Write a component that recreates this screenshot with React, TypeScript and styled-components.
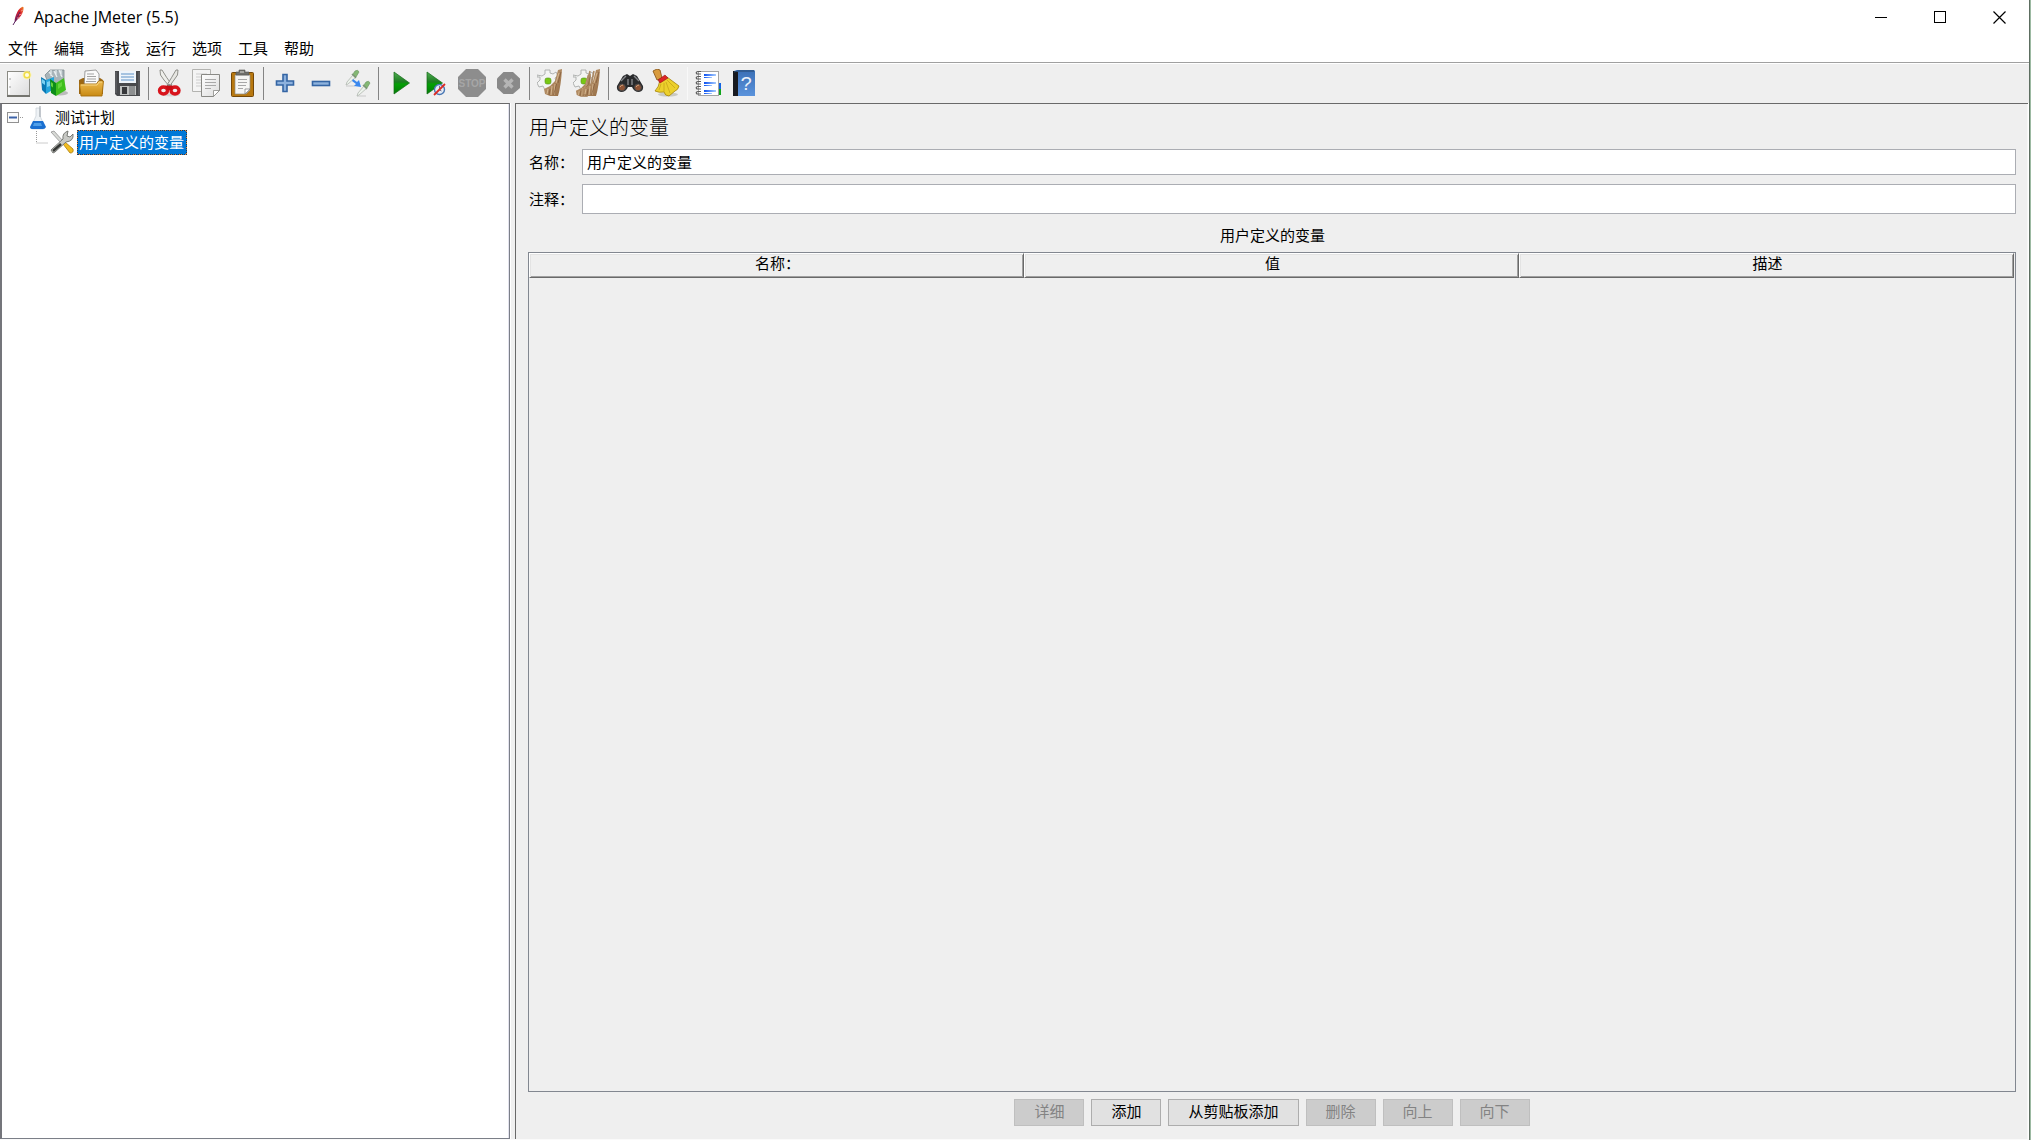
import React, { useState } from 'react';
import styled, { createGlobalStyle, css } from 'styled-components';

const cjk = '"Noto Sans CJK SC", sans-serif';

const GlobalStyle = createGlobalStyle`
  * { box-sizing: border-box; }
  body { margin: 0; background: #ffffff; }
  button, input { font-family: inherit; font-size: inherit; color: inherit; }
`;

const Desktop = styled.div`
  min-height: 100vh;
  display: flex;
  background: #9cbaa2;
  padding-right: 1px;
  font-family: ${cjk};
  font-size: 15px;
  color: #000000;
`;

const Window = styled.div`
  flex: 1;
  min-width: 0;
  display: flex;
  flex-direction: column;
  background: #ffffff;
  border-right: 1px solid #5d6e61;
`;

const TitleBar = styled.header`
  height: 35px;
  display: flex;
  align-items: center;
  padding: 0 0 1px 9px;
`;

const AppName = styled.h1`
  flex: 1;
  margin: 0 0 0 7px;
  font-family: "Open Sans", "Noto Sans", sans-serif;
  font-size: 16px;
  font-weight: 400;
  line-height: 24px;
`;

const CaptionButton = styled.button`
  width: 59px;
  height: 34px;
  padding: 0;
  border: 0;
  background: transparent;
  display: flex;
  align-items: center;
  justify-content: center;
`;

const MenuBar = styled.nav`
  height: 27px;
  display: flex;
  align-items: center;
  gap: 16px;
  padding: 0 0 2px 8px;
`;

const MenuButton = styled.button`
  padding: 0;
  border: 0;
  background: transparent;
  line-height: 22px;
`;

const Toolbar = styled.div`
  height: 41px;
  display: flex;
  align-items: center;
  padding-left: 1px;
  background: #efefef;
  border-top: 1px solid #a0a0a0;
  box-shadow: inset 0 1px 0 #ffffff;
`;

const ToolButton = styled.button`
  width: 36px;
  height: 36px;
  padding: 0;
  border: 0;
  background: transparent;
  display: flex;
  align-items: center;
  justify-content: center;
`;

const Separator = styled.span<{ $faint?: boolean }>`
  width: 1px;
  height: 33px;
  margin: 0 3px;
  background: ${p => (p.$faint ? '#f8f8f8' : '#848484')};
`;

const Workspace = styled.div`
  flex: 1;
  display: flex;
  border-bottom: 1px solid #fafafa;
`;

const TreePane = styled.aside`
  width: 510px;
  flex: none;
  padding: 2px 0 0 5px;
  background: #ffffff;
  border: 1px solid #7b7f88;
  border-left: 2px solid #74757b;
  border-top-color: #696969;
  box-shadow: inset -1px 0 0 #e3e3ee;
`;

const Divider = styled.div`
  width: 5px;
  background: #f0f0f0;
  border-left: 1px solid #ffffff;
`;

const TreeList = styled.ul`
  margin: 0;
  padding: 0;
  list-style: none;
`;

const TreeRow = styled.div<{ $indent?: number }>`
  height: 24px;
  display: flex;
  align-items: center;
  padding-left: ${p => p.$indent ?? 0}px;
`;

const Expander = styled.button`
  width: 21px;
  height: 12px;
  padding: 0;
  border: 0;
  background: transparent;
  display: flex;
`;

const NodeLabel = styled.button<{ $selected?: boolean }>`
  height: 24px;
  padding: 0 2px 2px 0;
  border: 1px solid transparent;
  background: transparent;
  line-height: 20px;
  white-space: nowrap;
  ${p =>
    p.$selected &&
    css`
      height: 25px;
      margin-left: 3px;
      padding: 0 2px 1px 1px;
      background: #0078d7;
      border: 1px dashed #e08a3c;
      outline: 1px dotted #1c3a5c;
      outline-offset: -1px;
      color: #ffffff;
    `}
`;

const Editor = styled.main`
  flex: 1;
  min-width: 0;
  display: flex;
  flex-direction: column;
  padding: 8px 12px 13px;
  background: #efefef;
  border: solid #696969;
  border-width: 1px 0 0 1px;
  box-shadow: inset -1px 0 0 #f7f7f7;
  margin-right: 1px;
`;

const EditorTitle = styled.h2`
  margin: 0 0 7px;
  padding-left: 1px;
  font-size: 20px;
  font-weight: 300;
  line-height: 30px;
`;

const Field = styled.div<{ $height: number }>`
  height: ${p => p.$height}px;
  margin-bottom: 9px;
  display: flex;
  align-items: center;
  padding-left: 1px;
`;

const FieldLabel = styled.label`
  width: 53px;
  line-height: 22px;
`;

const TextBox = styled.input`
  flex: 1;
  min-width: 0;
  height: 100%;
  padding: 0 4px 2px;
  border: 1px solid #abadb3;
  border-radius: 0;
  background: #ffffff;
  outline: none;
`;

const VariablesSection = styled.section`
  flex: 1;
  display: flex;
  flex-direction: column;
`;

const SectionTitle = styled.h3`
  margin: 0;
  padding: 1px 0 6px 1px;
  font-size: 15px;
  font-weight: 400;
  line-height: 22px;
  text-align: center;
`;

const TableFrame = styled.div`
  flex: 1;
  border: 1px solid #828790;
  padding-right: 1px;
`;

const VariablesTable = styled.table`
  width: 100%;
  table-layout: fixed;
  border-collapse: separate;
  border-spacing: 0;
`;

const ColumnHead = styled.th`
  height: 25px;
  padding: 0 0 5px 2px;
  font-weight: 400;
  line-height: 18px;
  border: 1px solid;
  border-color: #ffffff #696969 #696969 #ffffff;
  box-shadow: inset 1px 1px 0 #e3e3e3, inset -1px -1px 0 #a0a0a0;
`;

const Actions = styled.div`
  display: flex;
  justify-content: center;
  gap: 7px;
  padding-top: 7px;
`;

const ActionButton = styled.button`
  height: 27px;
  padding: 0 19px 3px;
  border: 1px solid #adadad;
  background: #e1e1e1;
  line-height: 20px;
  &:disabled {
    border-color: #bfbfbf;
    background: #cccccc;
    color: #838383;
  }
`;

type ArtProps = { children: React.ReactNode };
const Art = ({ children }: ArtProps) => (
  <svg width="28" height="28" viewBox="0 0 28 28" aria-hidden="true">{children}</svg>
);

const Gradients = () => (
  <svg width="0" height="0" style={{ position: 'absolute' }} aria-hidden="true">
    <defs>
      <linearGradient id="paper" x1="0" y1="0" x2="1" y2="1"><stop offset="0" stopColor="#fff" /><stop offset="1" stopColor="#dcdcdc" /></linearGradient>
      <linearGradient id="gold" x1="0" y1="0" x2="0" y2="1"><stop offset="0" stopColor="#eebb50" /><stop offset="1" stopColor="#c88a14" /></linearGradient>
      <linearGradient id="green" x1="0" y1="0" x2="0" y2="1"><stop offset="0" stopColor="#4fae50" /><stop offset=".45" stopColor="#1d7d22" /><stop offset=".55" stopColor="#04a004" /><stop offset="1" stopColor="#047a08" /></linearGradient>
      <linearGradient id="book" x1="0" y1="0" x2="0" y2="1"><stop offset="0" stopColor="#3a6fb6" /><stop offset="1" stopColor="#5b93dc" /></linearGradient>
      <linearGradient id="feather" x1="1" y1="0" x2="0" y2="1"><stop offset="0" stopColor="#f08a24" /><stop offset=".4" stopColor="#d8202c" /><stop offset="1" stopColor="#7a1e62" /></linearGradient>
      <linearGradient id="rule" x1="0" y1="0" x2="1" y2="0"><stop offset="0" stopColor="#0a50f0" /><stop offset="1" stopColor="#a8ccff" /></linearGradient>
      <linearGradient id="straw" x1="0" y1="0" x2="1" y2="1"><stop offset="0" stopColor="#c8a47c" /><stop offset="1" stopColor="#946c44" /></linearGradient>
    </defs>
  </svg>
);

const FeatherIcon = () => (
  <svg width="18" height="22" viewBox="0 0 18 22" aria-hidden="true">
    <path d="M13 1Q15 0 14.500 3Q14 8 10 12L6 16Q5 14 7 9Q9 3 13 1Z" fill="url(#feather)" />
    <path d="M11 6L7 14L4 19" stroke="#5c2460" strokeWidth="1" fill="none" />
    <path d="M12 5l2-1M10 9l3-1M8 12l3 0" stroke="#f6a0a0" strokeWidth=".8" />
  </svg>
);

const NewIcon = () => (
  <Art>
    <rect x="2.500" y="2.500" width="22" height="24" fill="url(#paper)" stroke="#8b8b84" />
    <path d="M2 27h23" stroke="#74746e" strokeWidth="2" />
    <path d="M4 4v21" stroke="#fff" strokeWidth="1.500" />
    <path d="M5 9v2M5 17v2" stroke="#a0a0a0" />
    <circle cx="22" cy="6" r="4.500" fill="#fff6a8" opacity=".7" />
    <circle cx="22" cy="6" r="2.800" fill="#fffde0" stroke="#f0dc48" strokeWidth="1.500" />
  </Art>
);

const TemplatesIcon = () => (
  <Art>
    <ellipse cx="19" cy="24" rx="8" ry="2.500" fill="#bbb" />
    <path d="M4 6L9 1h14v15H8z" fill="#a9b4b9" stroke="#7e8b91" strokeWidth=".8" />
    <path d="M8 3l4 5M13 2l3 6M18 1l3 7M10 1v6M15 1v6M20 1v6" stroke="#e8eef0" strokeWidth="1.200" />
    <path d="M0 8l5 3v14l-4-4z" fill="#0878b4" />
    <path d="M5 11l8-3v12l-8 5z" fill="#24a4dc" /><path d="M1 10l3 2v4l-3-2zM6 13l3-1v5l-3 1z" fill="#78d0f2" />
    <path d="M9 10l6 4v13l-5-3z" fill="#0c8c18" />
    <path d="M15 14l8-5 2 12-10 6z" fill="#3ebf1c" />
    <path d="M10 13l2 1.500v4l-2-1.500zM17 15l4-2v4l-4 3z" fill="#63d43c" />
  </Art>
);

const OpenIcon = () => (
  <Art>
    <path d="M2 11l4-2h17l3 2v14H2z" fill="#9c6714" />
    <path d="M8 2l11-1 3 4v13H7z" fill="#fafafa" stroke="#888" strokeWidth=".8" />
    <path d="M10 5h7M10 7.500h9M10 10h9M9 12.500h10" stroke="#a3a3a3" strokeWidth="1" />
    <path d="M2.500 15h17l2-3h5l-1.500 15H4z" fill="url(#gold)" stroke="#a66d0c" strokeWidth=".9" />
    <path d="M4 16h16l2-3h3" fill="none" stroke="#f7d888" strokeWidth="1" />
  </Art>
);

const SaveIcon = () => (
  <Art>
    <path d="M2 2h25v25H4l-2-2z" fill="#48494c" />
    <path d="M3 3v21M26 3v23" stroke="#696a6e" />
    <rect x="6" y="2" width="17" height="12" fill="#eef4fa" />
    <path d="M8 5h13M8 8h13M8 11h13" stroke="#8fb3d8" strokeWidth="1.500" />
    <rect x="7" y="17" width="16" height="9" fill="#bfc1c0" />
    <rect x="9" y="18" width="5" height="7" fill="#36373a" /><rect x="16" y="17" width="6" height="9" fill="#8d8f90" />
  </Art>
);

const CutIcon = () => (
  <Art>
    <ellipse cx="15" cy="26" rx="9" ry="1.500" fill="#d6d6d6" />
    <path d="M4 1q-1 5 4 10l6 7 2-2Q10 8 6 1z" fill="#efefeb" stroke="#85857f" strokeWidth=".9" />
    <path d="M22 1q1 5-4 10l-5 7-2-2Q16 8 20 1z" fill="#e6e6e2" stroke="#85857f" strokeWidth=".9" />
    <ellipse cx="7.500" cy="21.500" rx="4" ry="3.500" fill="#efefef" stroke="#d8141c" strokeWidth="3.400" />
    <ellipse cx="19" cy="21.500" rx="4" ry="3.500" fill="#efefef" stroke="#d8141c" strokeWidth="3.400" />
    <path d="M9 17l4-1 4 1-1 4h-5z" fill="#c80c14" /><circle cx="13" cy="16" r="1" fill="#777" />
  </Art>
);

const CopyIcon = () => (
  <Art>
    <path d="M.5.500h18v22H.500z" fill="#f4f4f4" stroke="#b3b3b0" />
    <path d="M4 5h11M4 8h5M4 11h5M4 14h5M4 17h5" stroke="#cdcdcd" />
    <path d="M9.500 5.500h18v16l-6 6h-12z" fill="url(#paper)" stroke="#898985" />
    <path d="M13 10.500h11M13 13.500h11M13 16.500h11M13 19.500h6" stroke="#a8a8a8" />
    <path d="M21.500 27.500v-6h6z" fill="#fff" stroke="#898985" strokeWidth=".8" />
  </Art>
);

const PasteIcon = () => (
  <Art>
    <rect x="3.500" y="3.500" width="22" height="24" rx="1" fill="#b8780f" stroke="#744808" />
    <path d="M7 6h15v15l-4 4H7z" fill="#f6f6f4" stroke="#8c8c86" strokeWidth=".7" />
    <path d="M10 10.500h9M10 13.500h9M10 16.500h8M10 19.500h5" stroke="#a7a7a7" />
    <path d="M22 20l-5 5v-5z" fill="#fff" stroke="#777" strokeWidth=".7" />
    <path d="M8 6V3h3V1h6v2h4v3z" fill="#70706c" stroke="#555550" strokeWidth=".6" />
    <path d="M12 3h4" stroke="#deded8" />
  </Art>
);

const AddIcon = () => (
  <Art><path d="M12 5.500h4v6.500h6.500v4H16v6.500h-4V16H5.500v-4H12z" fill="#8db1dd" stroke="#3465a4" strokeWidth="1.600" /></Art>
);

const RemoveIcon = () => (
  <Art><rect x="5.500" y="12.500" width="17" height="4" fill="#8eb2dd" stroke="#3465a4" strokeWidth="1.600" /></Art>
);

const Pipette = () => (
  <g>
    <path d="M3 16l1-3 6-7 3 2-8 7z" fill="#edf3ec" stroke="#b1b7b0" strokeWidth=".8" />
    <path d="M9 5l4 4" stroke="#81957c" strokeWidth="1.500" />
    <path d="M10 5l2-3q3-2 4 1l-3 5z" fill="#84b874" stroke="#6a945f" strokeWidth=".6" />
  </g>
);

const ToggleIcon = () => (
  <Art>
    <path d="M3 17h9M14 27h9" stroke="#d6d6d6" strokeWidth="1.600" />
    <Pipette /><g transform="translate(11 11)"><Pipette /></g>
    <path d="M10 10l4 3 2-2 2 7-7-1 2-2-4-3z" fill="#3b88ee" />
  </Art>
);

const StartIcon = () => (
  <Art><path d="M8 3l15.500 11L8 25z" fill="url(#green)" stroke="#146c18" strokeWidth=".7" /></Art>
);

const StartNoPauseIcon = () => (
  <Art>
    <path d="M5 3l15.500 11L5 25z" fill="url(#green)" stroke="#146c18" strokeWidth=".7" />
    <circle cx="17.500" cy="20.500" r="5" fill="#e6ecf5" stroke="#4a78b4" strokeWidth="1.400" />
    <path d="M17.500 17v4l2 1" stroke="#557" strokeWidth=".8" fill="none" />
    <path d="M12 26L23 15" stroke="#dc2c24" strokeWidth="1.800" />
  </Art>
);

const StopIcon = () => (
  <Art>
    <path d="M8 0h12l8 8v12l-8 8H8l-8-8V8z" fill="#8d8d8d" />
    <text x="14" y="18" textAnchor="middle" fontFamily="Liberation Sans Narrow, Liberation Sans, sans-serif" fontSize="10" fontWeight="700" fill="#a6a6a6">STOP</text>
  </Art>
);

const ShutdownIcon = () => (
  <Art>
    <path d="M9.500 3h9.500l7 6.500v9.500l-7 6H9.500l-6.500-6V9.500z" fill="#898989" />
    <path d="M10.500 10.500l8 8M18.500 10.500l-8 8" stroke="#b5b5b5" strokeWidth="3.400" />
  </Art>
);

const Gear = () => (
  <g>
    <path d="M8 1h5v3l3 1 3-2 2 4-3 2 1 3 3 1v4l-4 1-2 3-4-1-4 1-2-4-4 1-2-4 3-3v-3H0V6l5 1 3-2z" fill="#f3f4f3" stroke="#a9acaa" strokeWidth=".9" />
    <rect x="8" y="9" width="6" height="6" rx="2" fill="#78c814" stroke="#549018" strokeWidth=".6" />
  </g>
);

const Twig = () => (
  <g>
    <path d="M25 0l-4 1-3 11-5 5-6 3 1 5 5 2h8q3-10 4-27z" fill="url(#straw)" />
    <path d="M11 20l-1 5M15 17l-1 9M18 15l-1 11M22 4l-3 10" stroke="#dec39d" strokeWidth=".8" />
    <path d="M13 20l-1 6M19.500 15l-3 11M24 3l-3 11" stroke="#785130" strokeWidth=".6" />
  </g>
);

const ClearIcon = () => (<Art><Gear /><Twig /></Art>);
const ClearAllIcon = () => (
  <Art>
    <Gear />
    <g transform="translate(-3 5) scale(.84)"><Twig /></g>
    <g transform="translate(2 0)"><Twig /></g>
    <path d="M17 2l-3 14M21 2l-3 14" stroke="#ac8a65" strokeWidth="1.600" />
  </Art>
);

const SearchIcon = () => (
  <Art>
    <path d="M7 7l4-2 3 2 3-2 4 2 6 10q1 5-4 6-5 0-7-5h-4q-2 5-7 5-5-1-4-6z" fill="#292a2c" />
    <path d="M5 12l5-5M23 12l-5-5M12 10v6M16 10v6" stroke="#85878a" strokeWidth="1.400" />
    <circle cx="6" cy="18.500" r="3.400" fill="#8e5233" stroke="#4a4a4a" /><circle cx="22" cy="18.500" r="3.400" fill="#8e5233" stroke="#4a4a4a" />
    <path d="M4 18q1-2 3-2M20 18q1-2 3-2" fill="none" stroke="#d2a27e" strokeWidth="1" />
  </Art>
);

const BroomIcon = () => (
  <Art>
    <ellipse cx="16" cy="25.500" rx="10" ry="2" fill="#c9c9c3" />
    <path d="M1 2l4-2 3 1 2 8-5 2z" fill="#d99b3e" stroke="#8c5a1b" strokeWidth=".9" />
    <path d="M8 11l7-3 12 9q-1 4-4 5l-6 5q-4 0-5-4-5 1-9-1 4-4 5-11z" fill="#ecd02c" stroke="#a58409" strokeWidth=".8" />
    <path d="M9 15l-2 6M12 14v9M14 13l4 11M15 11l8 8" stroke="#cdaa1c" strokeWidth=".9" />
    <path d="M6 11l7-5 3 3-8 5z" fill="#dc2424" stroke="#991313" strokeWidth=".6" />
  </Art>
);

const FunctionIcon = () => (
  <Art>
    <path d="M22 14h4v6h-4z" fill="#1264e4" /><path d="M22 20h4v6h-4z" fill="#10a41c" />
    <rect x="3.500" y="2.500" width="20" height="24" fill="#fff" stroke="#a4a4a4" />
    {[5, 13, 21].map(y => (<g key={y}><rect x="9" y={y} width="12" height="2" fill="url(#rule)" /><rect x="9" y={y + 3} width="8" height="1" fill="url(#rule)" /></g>))}
    {[4, 9, 14, 19, 24].map(y => (<path key={y} d={`M6 ${y + 1}H2q-2-2 1-2.500h3`} fill="none" stroke="#5c5c5c" strokeWidth="1.200" />))}
  </Art>
);

const HelpIcon = () => (
  <Art>
    <path d="M2 2h5v25H2z" fill="#171a20" /><path d="M3 2l3-1h17l1 1v25H7V3z" fill="url(#book)" />
    <path d="M3 3l4-1h16" stroke="#27486f" fill="none" />
    <text x="15.500" y="21" textAnchor="middle" fontFamily="Liberation Mono, monospace" fontSize="20" fill="#e9f0f9">?</text>
  </Art>
);

const FlaskIcon = () => (
  <svg width="26" height="24" viewBox="0 0 26 24" aria-hidden="true">
    <path d="M8 2h4v8l5 11q0 2-2 2H5q-3 0-2-2l5-11z" fill="#eef2f5" stroke="#ccd3d9" strokeWidth=".8" />
    <path d="M5 15h10l3 6q-1 2-3 2H5q-3 0-3-2z" fill="#1a6fd0" /><path d="M6 17h7l1 3H5z" fill="#4f9fe8" />
    <path d="M12 0v11" stroke="#9aa2a9" />
  </svg>
);

const ToolsIcon = () => (
  <svg width="24" height="24" viewBox="0 0 24 24" aria-hidden="true">
    <path d="M1 2l3-1 9 10-2 2z" fill="#d7d9d5" stroke="#888" strokeWidth=".7" />
    <path d="M13 14l2-2 8 7q1 4-3 4z" fill="#f2bd22" stroke="#a97c0b" strokeWidth=".8" />
    <path d="M3 23l-2-3 12-11q-1-6 5-8l-1 5 3 1 3-3q1 7-7 8L5 22z" fill="#c8c9c5" stroke="#6d6f6b" strokeWidth=".9" />
    <path d="M3 21l8-7" stroke="#343634" strokeWidth="2.500" />
  </svg>
);

const tools: Array<[string, React.FC] | 'line' | 'faint'> = [
  ['新建', NewIcon], ['模板', TemplatesIcon], ['打开', OpenIcon], ['保存', SaveIcon], 'line',
  ['剪切', CutIcon], ['复制', CopyIcon], ['粘贴', PasteIcon], 'line',
  ['展开', AddIcon], ['折叠', RemoveIcon], ['切换', ToggleIcon], 'line',
  ['启动', StartIcon], ['不停顿启动', StartNoPauseIcon], ['停止', StopIcon], ['关闭', ShutdownIcon], 'line',
  ['清除', ClearIcon], ['清除全部', ClearAllIcon], 'line',
  ['查找', SearchIcon], ['重置查找', BroomIcon], 'faint',
  ['函数助手', FunctionIcon], ['帮助', HelpIcon],
];

const menus = ['文件', '编辑', '查找', '运行', '选项', '工具', '帮助'];
const columns = ['名称：', '值', '描述'];
const actions = [
  { label: '详细', disabled: true },
  { label: '添加', disabled: false },
  { label: '从剪贴板添加', disabled: false },
  { label: '删除', disabled: true },
  { label: '向上', disabled: true },
  { label: '向下', disabled: true },
];

export default function App() {
  const [name, setName] = useState('用户定义的变量');
  const [comment, setComment] = useState('');
  return (
    <Desktop>
      <GlobalStyle />
      <Gradients />
      <Window>
        <TitleBar>
          <FeatherIcon />
          <AppName>Apache JMeter (5.5)</AppName>
          <CaptionButton aria-label="最小化"><svg width="13" height="13"><path d="M0 6.500h12" stroke="#000" /></svg></CaptionButton>
          <CaptionButton aria-label="最大化"><svg width="13" height="13"><rect x=".5" y=".5" width="11" height="11" fill="none" stroke="#000" /></svg></CaptionButton>
          <CaptionButton aria-label="关闭窗口"><svg width="13" height="13"><path d="M.5.500l12 12M12.500.500l-12 12" stroke="#000" strokeWidth="1.200" /></svg></CaptionButton>
        </TitleBar>
        <MenuBar>{menus.map(m => <MenuButton key={m}>{m}</MenuButton>)}</MenuBar>
        <Toolbar role="toolbar">
          {tools.map((t, i) => {
            if (typeof t === 'string') return <Separator key={i} $faint={t === 'faint'} />;
            const [label, Icon] = t;
            return (
              <ToolButton key={label} aria-label={label} disabled={label === '停止' || label === '关闭'}><Icon /></ToolButton>
            );
          })}
        </Toolbar>
        <Workspace>
          <TreePane>
            <TreeList>
              <li>
                <TreeRow>
                  <Expander aria-label="折叠节点">
                    <svg width="21" height="12"><rect x=".5" y=".5" width="11" height="10" fill="#fbfbfb" stroke="#919191" /><path d="M2 5.500h8" stroke="#3c62a8" strokeWidth="2" /><path d="M13 5.500h3" stroke="#999" strokeDasharray="1 1" /></svg>
                  </Expander>
                  <FlaskIcon />
                  <NodeLabel>测试计划</NodeLabel>
                </TreeRow>
                <TreeList>
                  <li>
                    <TreeRow $indent={29}>
                      <svg width="14" height="24" aria-hidden="true"><path d="M.5 1v12h12" fill="none" stroke="#999" strokeDasharray="1 1" /></svg>
                      <ToolsIcon />
                      <NodeLabel $selected>用户定义的变量</NodeLabel>
                    </TreeRow>
                  </li>
                </TreeList>
              </li>
            </TreeList>
          </TreePane>
          <Divider />
          <Editor>
            <EditorTitle>用户定义的变量</EditorTitle>
            <Field $height={26}>
              <FieldLabel htmlFor="name">名称：</FieldLabel>
              <TextBox id="name" value={name} onChange={e => setName(e.target.value)} />
            </Field>
            <Field $height={30}>
              <FieldLabel htmlFor="comment">注释：</FieldLabel>
              <TextBox id="comment" value={comment} onChange={e => setComment(e.target.value)} />
            </Field>
            <VariablesSection>
              <SectionTitle>用户定义的变量</SectionTitle>
              <TableFrame>
                <VariablesTable>
                  <thead><tr>{columns.map(c => <ColumnHead key={c} scope="col">{c}</ColumnHead>)}</tr></thead>
                </VariablesTable>
              </TableFrame>
            </VariablesSection>
            <Actions>
              {actions.map(a => <ActionButton key={a.label} disabled={a.disabled}>{a.label}</ActionButton>)}
            </Actions>
          </Editor>
        </Workspace>
      </Window>
    </Desktop>
  );
}
